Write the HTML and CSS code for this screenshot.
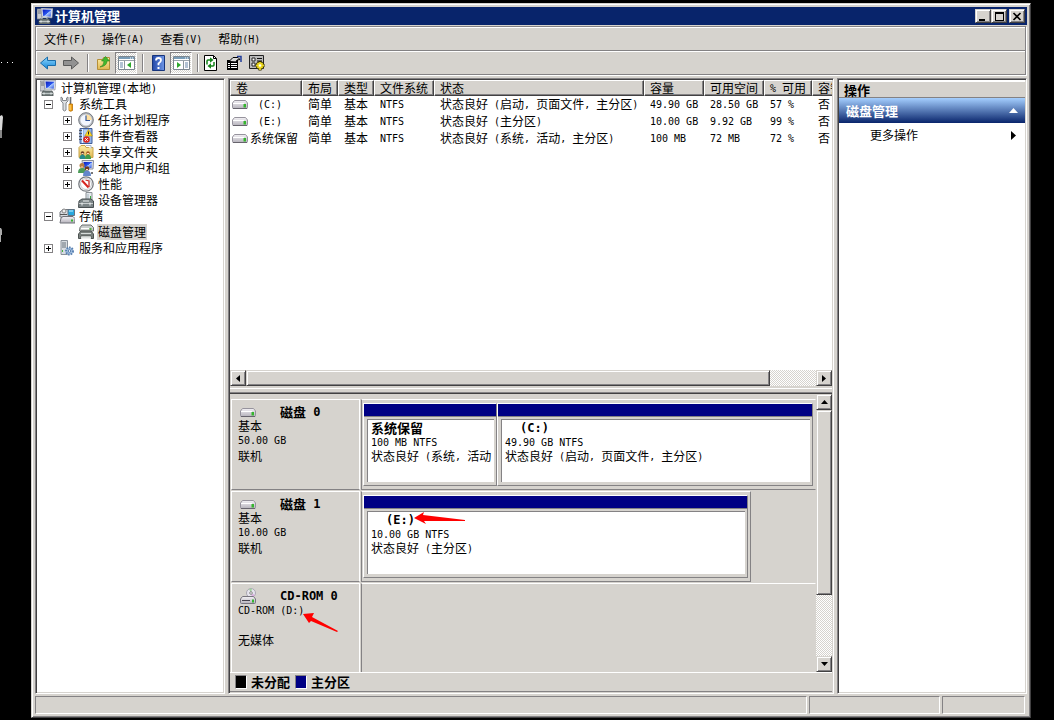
FILE: index.html
```html
<!DOCTYPE html>
<html lang="zh-CN">
<head>
<meta charset="utf-8">
<title>计算机管理</title>
<link rel="stylesheet" href="styles.css">
</head>
<body>
<svg class="sprites" aria-hidden="true">
  <defs>
    <linearGradient id="g-disk" x1="0" y1="0" x2="0" y2="1"><stop offset="0" stop-color="#f4f2f6"/><stop offset="1" stop-color="#b5b2bb"/></linearGradient>
    <linearGradient id="g-screen" x1="0" y1="0" x2="1" y2="1"><stop offset="0" stop-color="#0818b8"/><stop offset=".5" stop-color="#2a55ee"/><stop offset=".55" stop-color="#a8c8ff"/><stop offset="1" stop-color="#2448d8"/></linearGradient>
    <linearGradient id="g-blue" x1="0" y1="0" x2="0" y2="1"><stop offset="0" stop-color="#8fd8ff"/><stop offset="1" stop-color="#1687d8"/></linearGradient>
    <linearGradient id="g-folder" x1="0" y1="0" x2="0" y2="1"><stop offset="0" stop-color="#fff0a8"/><stop offset="1" stop-color="#dfb650"/></linearGradient>
    <linearGradient id="g-help" x1="0" y1="0" x2="1" y2="0"><stop offset="0" stop-color="#2348a8"/><stop offset="1" stop-color="#6f96e6"/></linearGradient>
  </defs>
  <symbol id="i-computer" viewBox="0 0 16 16">
    <path d="M0 1h5v10H0z" fill="#c9ccd2" stroke="#777b84" stroke-width=".8"/>
    <path d="M1 3h3M1 5h3" stroke="#6d7179"/>
    <path d="M4 0l12 .5-1 9.5-10-1z" fill="#dfe3ec" stroke="#848894" stroke-width=".6"/>
    <path d="M5.500 1.500l9 .3-.8 7-7.500-.8z" fill="url(#g-screen)"/>
    <path d="M3 11h9l1 2v3H2v-3z" fill="#768080" stroke="#4a5152" stroke-width=".8"/>
    <path d="M5 11V9.500h5V11M2 13.500h11" fill="none" stroke="#bcc5c5"/>
    <path d="M4 12.500v2M11 12.500v2" stroke="#eef2f2"/>
  </symbol>
  <symbol id="i-disk" viewBox="0 0 16 16">
    <path d="M2.500 4.500h11l2 2.500v4.500q0 1-1 1h-13q-1 0-1-1V7z" fill="url(#g-disk)" stroke="#96939d"/>
    <path d="M1 7.500h11" stroke="#fff"/>
    <path d="M1 12.500h14" stroke="#66636c"/>
    <path d="M11.500 8h2.500v3.500h-2.500z" fill="#35b52e"/>
  </symbol>
  <symbol id="i-cd" viewBox="0 0 16 16">
    <circle cx="11" cy="5" r="4.500" fill="#e6e4ee" stroke="#aaa7b2"/>
    <path d="M11 5l-2-4 3-.5z" fill="#9ed49a"/><path d="M11 5l4 2-3 2.500z" fill="#d8b0dd"/>
    <circle cx="11" cy="5" r="1.300" fill="#fff" stroke="#888"/>
    <path d="M2.500 8.500h11l2 2.500v3.500q0 1-1 1h-13q-1 0-1-1V11z" fill="url(#g-disk)" stroke="#77747e"/>
    <path d="M2 12.500h8" stroke="#44424c"/><path d="M12 11.500h2v3h-2z" fill="#35b52e"/>
  </symbol>
  <symbol id="i-tools" viewBox="0 0 16 16">
    <path d="M2 1v4l2 2v7q1.500 2 3 0V7l2-2V1L7.500 2v2.500h-4V2z" fill="#dde0e3" stroke="#777c82" stroke-width=".9"/>
    <path d="M11.500 1v7" stroke="#666b70" stroke-width="1.600"/>
    <path d="M10 8h3.500v6.500q-1.800 1.500-3.500 0z" fill="#f0a31a" stroke="#b66f05" stroke-width=".8"/><path d="M11 9v5" stroke="#ffe08a"/>
  </symbol>
  <symbol id="i-clock" viewBox="0 0 16 16">
    <circle cx="8" cy="8" r="7.300" fill="#b9bdc3" stroke="#73777e"/>
    <circle cx="8" cy="8" r="5.600" fill="#f3f7ff"/><path d="M8 8V2.400A5.600 5.600 0 0 1 13.600 8z" fill="#ffe0a0"/>
    <path d="M8 3.500V8.500h4" fill="none" stroke="#35589a" stroke-width="1.200"/>
  </symbol>
  <symbol id="i-event" viewBox="0 0 16 16">
    <path d="M2 .5h12v15H2z" fill="#91b4e8" stroke="#405d98"/><path d="M4.500 1v14" stroke="#e8f0ff"/>
    <path d="M1 2.500h3M1 5.500h3M1 8.500h3M1 11.500h3" stroke="#4d5560"/>
    <path d="M6 3h6M6 5h5M6 7h6" stroke="#e5eefc"/>
    <path d="M10.500 1.500l3.800 6.500H6.800z" fill="#ffdb2a" stroke="#b78b00" stroke-width=".6"/><path d="M10.500 3.500v3" stroke="#222"/>
    <circle cx="8.500" cy="11.500" r="3.300" fill="#dc2822"/><path d="M7.200 10.200l2.600 2.600M9.800 10.200l-2.600 2.600" stroke="#fff"/>
  </symbol>
  <symbol id="i-share" viewBox="0 0 16 16">
    <path d="M1 3.500l2-2h4l1 2h7v10H1z" fill="url(#g-folder)" stroke="#c9a44a"/>
    <path d="M8 1.500h5v3" fill="#fff" stroke="#a8b8d0"/>
    <circle cx="4.500" cy="9" r="1.800" fill="#68412b"/><path d="M1.500 15q0-4.500 3-4.500t3 4.500z" fill="#268b8b"/>
    <circle cx="10" cy="9" r="1.800" fill="#a4571f"/><path d="M7 15q0-4.500 3-4.500t3 4.500z" fill="#3f9b4b"/><path d="M3.500 9.500h2M9 9.500h2" stroke="#ffd8b5"/>
  </symbol>
  <symbol id="i-users" viewBox="0 0 16 16">
    <path d="M4 .5h11.500l-.5 8.500H5z" fill="#dfe3ec" stroke="#8a8e99"/><path d="M5.500 2h8.500l-.5 6H6z" fill="url(#g-screen)"/>
    <circle cx="4" cy="5.500" r="2.500" fill="#b87d40"/><path d="M0 13q0-5 4-5t4 5z" fill="#4c9c58"/>
    <circle cx="9" cy="8.500" r="2.300" fill="#6b3b24"/><path d="M5 16q0-5.500 4-5.500t4 5.500z" fill="#6387ca"/><path d="M8 9.500h2M3 7h2" stroke="#ffd8b5"/>
    <path d="M13 13h2" stroke="#777" stroke-width="2"/>
  </symbol>
  <symbol id="i-perf" viewBox="0 0 16 16">
    <circle cx="8" cy="8" r="7.200" fill="#fff" stroke="#777b80" stroke-width="1.300"/>
    <circle cx="8" cy="8" r="5.500" fill="none" stroke="#c3c7cb"/>
    <path d="M4 4.500l6.500 7" fill="none" stroke="#d72520" stroke-width="2"/><path d="M7.500 4l3.500 1v6" fill="none" stroke="#c72a27" stroke-width="1.300"/>
  </symbol>
  <symbol id="i-device" viewBox="0 0 16 16">
    <path d="M8 .5h6v8H8z" fill="#e4e8ec" stroke="#8a9095"/><path d="M10 2v5" stroke="#a3b4bd"/><path d="M12 4h1v4h-1z" fill="#3aab3a"/>
    <path d="M1 9l3-2h9l2.500 2v6.500H.5z" fill="#7c8587" stroke="#495052"/>
    <path d="M1 11.500h14" stroke="#c8cecf"/><path d="M5 9h6M4 10.500v3M12 10.500v3" stroke="#eef1f1"/>
  </symbol>
  <symbol id="i-storage" viewBox="0 0 16 16">
    <path d="M1 4l3-2.500h6V9H1z" fill="#d9dbe0" stroke="#777b81"/><circle cx="5" cy="3" r="2" fill="#eee" stroke="#888"/>
    <path d="M9 1.500h6.500v6H9z" fill="#28a8df" stroke="#637483"/><path d="M10 3h4" stroke="#c6f1ff"/>
    <path d="M2 10l2-1.500h10l2 2v4.500H1z" fill="url(#g-disk)" stroke="#6f7178"/><path d="M12 11.500h2v2h-2z" fill="#35b52e"/><path d="M1 6.500h7" stroke="#555"/>
  </symbol>
  <symbol id="i-diskmgmt" viewBox="0 0 16 16">
    <path d="M2 3.500L4 1h9l2.500 2.500V7h-14z" fill="#c9cdcc" stroke="#686d6c"/><path d="M3 4.500h8" stroke="#fff"/><path d="M11.500 4h2v2h-2z" fill="#55b33d"/>
    <path d="M.5 10L3 7h10l2.500 3v4.500H13V12H3v2.500H.5z" fill="#7a807e" stroke="#4e5452"/><path d="M3 9.500h10" stroke="#d7dcda"/>
    <path d="M3 12.500h10v2H3z" fill="#dfe2e1"/>
  </symbol>
  <symbol id="i-services" viewBox="0 0 16 16">
    <path d="M2 .5h6.500v14H2z" fill="#d8dde2" stroke="#89919a"/><path d="M3 3h4M3 5h4M3 7h4" stroke="#68727c"/><path d="M3 10h1v2H3z" fill="#43b43c"/>
    <circle cx="10.500" cy="11" r="3.500" fill="#a8c4e4" stroke="#5a82b2" stroke-width="2" stroke-dasharray="1.600 1"/><circle cx="10.500" cy="11" r="1.300" fill="#fff" stroke="#5079aa"/>
  </symbol>
  <symbol id="i-console" viewBox="0 0 17 14">
    <path d="M.5.500h16v13H.5z" fill="#fff" stroke="#7c8790"/><path d="M1 2h15" stroke="#7a9db8" stroke-width="2"/><path d="M12 2h3" stroke="#fff" stroke-dasharray="1 1"/>
    <path d="M1 4.500h15" stroke="#9aa4ac"/>
  </symbol>
</svg>

<svg class="desktop-left" width="14" height="250" viewBox="0 0 14 250" aria-hidden="true">
  <path d="M1 62h1v1H1zM7 62h1v1H7zM12 62h1v1h-1z" fill="#fff"/>
  <path d="M0 116l2-1 1 2-1 13H0z" fill="#d8d8d8"/><path d="M0 130h2v8H0z" fill="#888"/>
  <path d="M0 228h1l1 2v5H1v7H0z" fill="#aaa"/>
</svg>

<div class="window">
  <header class="titlebar">
    <svg class="icon"><use href="#i-computer"/></svg>
    <h1 class="strong">计算机管理</h1>
    <button class="raised caption" aria-label="最小化"><svg width="10" height="9"><path d="M1 7h6v2H1z"/></svg></button>
    <button class="raised caption" aria-label="最大化"><svg width="10" height="9"><path d="M1 0h9v9H1zM2 2v6h7V2z" fill-rule="evenodd"/></svg></button>
    <button class="raised caption caption-close" aria-label="关闭"><svg width="10" height="9"><path d="M1.500 1l7 7M8.500 1l-7 7" stroke="#000" stroke-width="1.600"/></svg></button>
  </header>

  <div class="bands">
    <nav class="menubar">
      <button>文件<span class="en">(F)</span></button>
      <button>操作<span class="en">(A)</span></button>
      <button>查看<span class="en">(V)</span></button>
      <button>帮助<span class="en">(H)</span></button>
    </nav>
    <div class="toolbar" role="toolbar">
      <button aria-label="后退"><svg class="icon"><path d="M.5 8l7-6v3.500h8v5h-8V14z" fill="url(#g-blue)" stroke="#1b6daa"/></svg></button>
      <button aria-label="前进"><svg class="icon"><path d="M15.500 8l-7-6v3.500h-8v5h8V14z" fill="#929292" stroke="#5a5a5a"/></svg></button>
      <span class="divider"></span>
      <button aria-label="上移"><svg class="icon"><path d="M1.500 4.500h5l1-2h6v12h-12z" fill="url(#g-folder)" stroke="#b68f38"/><path d="M4 12q4-1 4-6H5.500l4-4.500 4 4.500H11q0 5-7 6z" fill="#43b82f" stroke="#24861a" stroke-width=".6"/></svg></button>
      <button class="pressed" aria-label="显示或隐藏控制台树" aria-pressed="true"><svg width="17" height="14"><use href="#i-console"/><path d="M6.500 5v8" stroke="#8b959d"/><path d="M2 7h3M2 9h3M2 11h3" stroke="#6685a8"/><path d="M13 6v6L9 9z" fill="#2da82c"/></svg></button>
      <span class="divider"></span>
      <button aria-label="帮助"><svg class="icon"><path d="M1.500.500h12v15h-12z" fill="url(#g-help)" stroke="#17357c"/><path d="M5 5.500q0-2.500 2.500-2.500T10 5.300Q10 7 7.500 8.500v1.800" fill="none" stroke="#fff" stroke-width="1.800"/><path d="M6.500 12h2v2h-2z" fill="#fff"/></svg></button>
      <button class="pressed" aria-label="显示或隐藏操作窗格" aria-pressed="true"><svg width="17" height="14"><use href="#i-console"/><path d="M10.500 5v8" stroke="#8b959d"/><path d="M12 7h3M12 9h3M12 11h3" stroke="#6685a8"/><path d="M4 6v6l4-3z" fill="#2da82c"/></svg></button>
      <span class="divider divider-tight"></span>
      <button aria-label="刷新"><svg class="icon"><path d="M1.500.500h9l3 3v12h-12z" fill="#fff" stroke="#000"/><path d="M10.500.500v3h3" fill="none" stroke="#000"/><path d="M4 9.500V6q0-1 1-1h3M11 7v3q0 1-1 1H7" fill="none" stroke="#138519" stroke-width="1.500"/><path d="M7 2.300L10.500 5 7 7.700zM8 8.300L4.500 11 8 13.700z" fill="#138519"/></svg></button>
      <button aria-label="属性"><svg class="icon"><path d="M1 5h11v10H1z"/><path d="M2 8.500h2M5 8.500h6M2 10.500h2M5 10.500h6M2 12.500h2M5 12.500h6" stroke="#fff"/><path d="M3 6.500l4-4h5l2 2-3 .5-1 2z" fill="#d9d9d9" stroke="#000"/><path d="M11 1.500h4V7" fill="none" stroke="#213c98" stroke-width="1.500"/></svg></button>
      <button aria-label="设置"><svg class="icon"><path d="M.5.500h14v13H.5z" fill="#bbb" stroke="#222"/><path d="M3 3h3v3H3zM3 8h3v3H3z" fill="#fff" stroke="#222"/><path d="M8 3.500h5M8 6h5" stroke="#111"/><path d="M11 6v9.500M6.500 10.500h9M8 7.500l6 6M14 7.500l-6 6" stroke="#302b00" stroke-width="3"/><path d="M11 7v8M7 10.500h8M8.500 8l5 5M13.500 8l-5 5" stroke="#f0dc20" stroke-width="1.800"/><circle cx="11" cy="10.500" r="1.200" fill="#fff"/></svg></button>
    </div>
  </div>

  <main class="panes">
    <nav class="pane">
      <ul class="tree">
        <li><div class="node root"><svg class="icon"><use href="#i-computer"/></svg><span>计算机管理<span class="en">(</span>本地<span class="en">)</span></span></div>
          <ul>
            <li><div class="node"><button class="toggle open" aria-label="折叠"></button><svg class="icon"><use href="#i-tools"/></svg><span>系统工具</span></div>
              <ul>
                <li class="node"><button class="toggle" aria-label="展开"></button><svg class="icon"><use href="#i-clock"/></svg><span>任务计划程序</span></li>
                <li class="node"><button class="toggle" aria-label="展开"></button><svg class="icon"><use href="#i-event"/></svg><span>事件查看器</span></li>
                <li class="node"><button class="toggle" aria-label="展开"></button><svg class="icon"><use href="#i-share"/></svg><span>共享文件夹</span></li>
                <li class="node"><button class="toggle" aria-label="展开"></button><svg class="icon"><use href="#i-users"/></svg><span>本地用户和组</span></li>
                <li class="node"><button class="toggle" aria-label="展开"></button><svg class="icon"><use href="#i-perf"/></svg><span>性能</span></li>
                <li class="node leaf"><svg class="icon"><use href="#i-device"/></svg><span>设备管理器</span></li>
              </ul>
            </li>
            <li><div class="node"><button class="toggle open" aria-label="折叠"></button><svg class="icon"><use href="#i-storage"/></svg><span>存储</span></div>
              <ul>
                <li class="node leaf"><svg class="icon"><use href="#i-diskmgmt"/></svg><span class="selected">磁盘管理</span></li>
              </ul>
            </li>
            <li class="node"><button class="toggle" aria-label="展开"></button><svg class="icon"><use href="#i-services"/></svg><span>服务和应用程序</span></li>
          </ul>
        </li>
      </ul>
    </nav>

    <section class="pane center">
      <div class="volumes">
        <table>
          <colgroup><col class="c-name"><col class="c-small"><col class="c-small"><col class="c-mid"><col><col class="c-mid"><col class="c-mid"><col class="c-pct"><col class="c-last"></colgroup>
          <thead><tr><th>卷</th><th>布局</th><th>类型</th><th>文件系统</th><th>状态</th><th>容量</th><th>可用空间</th><th><span class="en">% </span>可用</th><th>容错</th></tr></thead>
          <tbody>
            <tr><td><div class="volume"><svg class="icon"><use href="#i-disk"/></svg><span class="letter"><span class="en">(C:)</span></span></div></td><td>简单</td><td>基本</td><td><span class="en">NTFS</span></td><td>状态良好<span class="en"> (</span>启动<span class="en">, </span>页面文件<span class="en">, </span>主分区<span class="en">)</span></td><td><span class="en">49.90 GB</span></td><td><span class="en">28.50 GB</span></td><td><span class="en">57 %</span></td><td>否</td></tr>
            <tr><td><div class="volume"><svg class="icon"><use href="#i-disk"/></svg><span class="letter"><span class="en">(E:)</span></span></div></td><td>简单</td><td>基本</td><td><span class="en">NTFS</span></td><td>状态良好<span class="en"> (</span>主分区<span class="en">)</span></td><td><span class="en">10.00 GB</span></td><td><span class="en">9.92 GB</span></td><td><span class="en">99 %</span></td><td>否</td></tr>
            <tr><td><div class="volume"><svg class="icon"><use href="#i-disk"/></svg><span>系统保留</span></div></td><td>简单</td><td>基本</td><td><span class="en">NTFS</span></td><td>状态良好<span class="en"> (</span>系统<span class="en">, </span>活动<span class="en">, </span>主分区<span class="en">)</span></td><td><span class="en">100 MB</span></td><td><span class="en">72 MB</span></td><td><span class="en">72 %</span></td><td>否</td></tr>
          </tbody>
        </table>
      </div>
      <div class="hscroll">
        <button class="raised" aria-label="向左滚动"><svg width="4" height="7"><path d="M4 0v7L0 3.500z"/></svg></button>
        <div class="track"><div class="raised thumb"></div></div>
        <button class="raised" aria-label="向右滚动"><svg width="4" height="7"><path d="M0 0v7l4-3.500z"/></svg></button>
      </div>
      <div class="splitter"></div>

      <div class="graphic">
        <div class="disks">
          <section class="disk">
            <div class="info">
              <h2><svg class="icon"><use href="#i-disk"/></svg><span class="strong">磁盘<span class="en"> 0</span></span></h2>
              <p>基本</p><p><span class="en">50.00 GB</span></p><p class="state">联机</p>
            </div>
            <div class="canvas">
              <div class="part part-reserved"><div class="stripe"></div><div class="face">
                <p class="strong">系统保留</p><p><span class="en">100 MB NTFS</span></p><p>状态良好<span class="en"> (</span>系统<span class="en">, </span>活动</p></div></div>
              <div class="part"><div class="stripe"></div><div class="face">
                <p class="strong drive"><span class="en">(C:)</span></p><p><span class="en">49.90 GB NTFS</span></p><p>状态良好<span class="en"> (</span>启动<span class="en">, </span>页面文件<span class="en">, </span>主分区<span class="en">)</span></p></div></div>
            </div>
          </section>
          <section class="disk">
            <div class="info">
              <h2><svg class="icon"><use href="#i-disk"/></svg><span class="strong">磁盘<span class="en"> 1</span></span></h2>
              <p>基本</p><p><span class="en">10.00 GB</span></p><p class="state">联机</p>
            </div>
            <div class="canvas canvas-short">
              <div class="part"><div class="stripe"></div><div class="face">
                <p class="strong drive"><span class="en">(E:)</span></p><p><span class="en">10.00 GB NTFS</span></p><p>状态良好<span class="en"> (</span>主分区<span class="en">)</span></p></div></div>
              <svg class="pointer pointer-e" width="52" height="12" aria-hidden="true"><path d="M0 6L10 0l-1 3 42 5v1L10 9l2 3z"/></svg>
            </div>
          </section>
          <section class="disk">
            <div class="info">
              <h2><svg class="icon"><use href="#i-cd"/></svg><span class="strong"><span class="en">CD-ROM 0</span></span></h2>
              <p><span class="en">CD-ROM (D:)</span></p><p></p><p class="state">无媒体</p>
              <svg class="pointer pointer-d" width="36" height="20" aria-hidden="true"><path d="M0 1L11 0 9 4l26 14-1 1L8 8l-2 2z"/></svg>
            </div>
            <div class="canvas canvas-empty"></div>
          </section>
        </div>
        <div class="vscroll">
          <button class="raised" aria-label="向上滚动"><svg width="7" height="4"><path d="M0 4h7L3.500 0z"/></svg></button>
          <div class="track"><div class="raised thumb"></div></div>
          <button class="raised" aria-label="向下滚动"><svg width="7" height="4"><path d="M0 0h7L3.500 4z"/></svg></button>
        </div>
      </div>
      <div class="legend strong"><span class="swatch"></span><span>未分配</span><span class="swatch swatch-primary"></span><span>主分区</span></div>
    </section>

    <aside class="pane">
      <h2 class="actions-title strong">操作</h2>
      <button class="actions-group strong">磁盘管理<svg width="9" height="5"><path d="M0 5h9L4.500 0z" fill="#fff"/></svg></button>
      <button class="actions-more">更多操作<svg width="5" height="9"><path d="M0 0v9l5-4.500z"/></svg></button>
    </aside>
  </main>

  <footer class="statusbar"><span></span><span></span><span></span></footer>
</div>
</body>
</html>
```

FILE: styles.css
```css
:root {
  --face: #d6d3ce;
  --light: #fff;
  --shade: #848284;
  --dark: #424142;
  --title: #08246b;
  --navy: #000084;
}

* { box-sizing: border-box; }

body {
  margin: 0;
  height: 100vh;
  padding: 3px 23px 2px 31px;
  background: #000;
  color: #000;
  font: 12px/16px "Noto Sans CJK SC", sans-serif;
  overflow: hidden;
}

h1, h2, p, ul { margin: 0; padding: 0; font-size: inherit; font-weight: inherit; }
ul { list-style: none; }
button { margin: 0; padding: 0; border: 0; background: none; font: inherit; color: inherit; }
svg { flex: none; display: block; }

.sprites { position: absolute; width: 0; height: 0; }
.desktop-left { position: absolute; left: 0; top: 0; }
.icon { width: 16px; height: 16px; }
.en { font-family: "DejaVu Sans Mono", monospace; font-size: 10px; line-height: 1; vertical-align: 1px; white-space: pre; }
.strong { font-size: 13px; font-weight: bold; }
.strong .en { font-size: 12px; }

.raised {
  background: var(--face);
  border: 1px solid;
  border-color: var(--face) var(--dark) var(--dark) var(--face);
  box-shadow: inset 1px 1px var(--light), inset -1px -1px var(--shade);
}

.window {
  height: 100%;
  display: flex;
  flex-direction: column;
  padding: 3px;
  background: var(--face);
  border: 1px solid;
  border-color: var(--face) var(--dark) var(--dark) var(--face);
  box-shadow: inset 1px 1px var(--light), inset -1px -1px var(--shade);
}

/* Title bar */
.titlebar { display: flex; align-items: center; height: 18px; padding: 0 2px; background: var(--title); color: #fff; }
.titlebar h1 { flex: 1; margin-left: 2px; }
.caption { display: flex; align-items: center; justify-content: center; width: 16px; height: 14px; }
.caption-close { margin-left: 2px; }

/* Menu and toolbar */
.bands {
  margin: 1px 1px 3px 0;
  border: 1px solid var(--shade);
  box-shadow: inset 1px 1px var(--light), 1px 1px var(--light);
}
.menubar { display: flex; gap: 16px; height: 24px; padding-left: 8px; border-bottom: 1px solid var(--shade); align-items: center; }
.toolbar { display: flex; align-items: center; height: 23px; border-top: 1px solid var(--light); }
.toolbar button { display: flex; align-items: center; justify-content: center; width: 23px; height: 22px; }
.toolbar .pressed {
  width: 22px;
  border: 1px solid;
  border-color: var(--shade) var(--light) var(--light) var(--shade);
  background: repeating-conic-gradient(#fff 0 25%, var(--face) 0 50%) 0 0 / 2px 2px;
}
.divider { width: 2px; height: 18px; margin: 0 3px 0 5px; border-left: 1px solid var(--shade); border-right: 1px solid var(--light); }
.divider-tight { margin-right: 0; }

/* Panes */
.panes { flex: 1; min-height: 0; display: grid; grid-template-columns: 190px minmax(0, 1fr) 190px; gap: 3px; }
.pane {
  min-height: 0;
  background: #fff;
  border: 1px solid;
  border-color: var(--shade) var(--light) var(--light) var(--shade);
  box-shadow: inset 1px 1px var(--dark), inset -1px -1px var(--face);
  padding: 1px;
}

/* Tree */
.node { display: flex; align-items: center; height: 16px; padding-left: 7px; white-space: nowrap; }
.node .icon { margin-right: 4px; }
.node.root { padding-left: 3px; }
.node.root .icon { margin-right: 5px; }
.node.leaf { padding-left: 22px; }
.tree ul ul { padding-left: 19px; }
.tree .toggle {
  width: 9px;
  height: 9px;
  margin-right: 6px;
  border: 1px solid var(--shade);
  background:
    linear-gradient(#000, #000) center / 5px 1px no-repeat,
    linear-gradient(#000, #000) center / 1px 5px no-repeat;
}
.tree .toggle.open { background: linear-gradient(#000, #000) center / 5px 1px no-repeat; }
.selected { background: var(--face); padding: 0 1px; margin: 0 -1px; }

/* Volume list */
.center { display: flex; flex-direction: column; }
.volumes { flex: 1 1 0; min-height: 0; overflow: hidden; }
table { width: 100%; table-layout: fixed; border-collapse: separate; border-spacing: 0; }
.c-name { width: 72px; }
.c-small { width: 36px; }
.c-mid { width: 60px; }
.c-pct { width: 48px; }
.c-last { width: 20px; }
th, td { padding: 0 0 0 6px; overflow: hidden; white-space: nowrap; text-align: left; font-weight: normal; }
th {
  height: 16px;
  padding-left: 5px;
  line-height: 14px;
  background: var(--face);
  border: 1px solid;
  border-color: var(--light) var(--dark) var(--dark) var(--light);
  box-shadow: inset -1px -1px var(--shade);
}
th:last-child { border-right: 0; box-shadow: inset 0 -1px var(--shade); }
td { height: 17px; line-height: 16px; vertical-align: top; }
td:first-child { padding-left: 2px; }
.volume { display: flex; align-items: center; gap: 2px; height: 16px; }
.letter { padding-left: 8px; }

/* Scroll bars */
.hscroll { display: grid; grid-template-columns: 16px 1fr 16px; height: 16px; }
.vscroll { display: grid; grid-template-rows: 16px 1fr 16px; width: 16px; }
.hscroll button, .vscroll button { display: flex; align-items: center; justify-content: center; }
.track { background: repeating-conic-gradient(#fff 0 25%, var(--face) 0 50%) 0 0 / 2px 2px; }
.hscroll .thumb { width: 92%; height: 100%; }
.vscroll .thumb { height: 75%; }
.splitter {
  height: 8px;
  background: var(--face);
  border-top: 2px solid var(--face);
  border-bottom: 1px solid var(--dark);
  box-shadow: inset 0 1px var(--light), inset 0 -1px var(--shade);
}

/* Graphical view */
.graphic { display: grid; grid-template-columns: minmax(0, 1fr) 16px; background: var(--face); }
.disks { display: flex; flex-direction: column; gap: 1px; padding: 5px 0 0 1px; }
.disk { display: grid; grid-template-columns: 129px minmax(0, 1fr); gap: 1px; height: 91px; }
.disk:last-child { height: 89px; }
.info {
  position: relative;
  padding: 5px 0 0 6px;
  border: 1px solid;
  border-color: var(--light) var(--light) var(--shade) var(--light);
}
.disk:last-child .info { border-bottom: 0; }
.info p, .face p { height: 14px; line-height: 14px; white-space: nowrap; }
.info h2 { display: flex; align-items: center; gap: 24px; height: 14px; padding-left: 2px; }
.info .state { height: 16px; line-height: 16px; margin-top: 1px; }
.canvas {
  position: relative;
  display: flex;
  padding: 3px 2px 3px 1px;
  border: 1px solid;
  border-color: var(--light) transparent var(--shade) var(--shade);
}
.canvas-short { margin-right: 65px; border-right-color: var(--shade); }
.canvas-empty { border-bottom: 0; }
.part {
  flex: 1;
  min-width: 0;
  display: flex;
  flex-direction: column;
  border: 1px solid;
  border-color: var(--light) var(--shade) var(--shade) var(--light);
}
.part-reserved { flex: 0 0 134px; }
.stripe { height: 13px; background: var(--navy); border-bottom: 1px solid var(--shade); }
.face {
  flex: 1;
  margin: 2px 2px 3px 3px;
  padding: 1px 0 0 3px;
  background: #fff;
  border-top: 1px solid var(--shade);
  border-left: 1px solid var(--shade);
}
.face .drive { padding-left: 15px; }
.pointer { position: absolute; fill: #ff0000; }
.pointer-e { left: 52px; top: 20px; }
.pointer-d { left: 71px; top: 29px; }

.legend {
  display: flex;
  align-items: center;
  gap: 4px;
  height: 20px;
  padding-left: 5px;
  line-height: 14px;
  background: var(--face);
  border-top: 1px solid var(--light);
  border-bottom: 1px solid var(--shade);
}
.swatch { width: 12px; height: 14px; background: #000; border: 1px solid; border-color: var(--shade) var(--light) var(--light) var(--shade); }
.swatch-primary { background: var(--navy); }
.legend .swatch-primary { margin-left: 1px; }

/* Actions */
.actions-title {
  height: 17px;
  margin-top: 1px;
  padding-left: 5px;
  line-height: 15px;
  background: var(--face);
  border-top: 1px solid var(--light);
  border-bottom: 1px solid var(--shade);
}
.pane .actions-group, .pane .actions-more { display: flex; align-items: center; justify-content: space-between; }
.actions-group {
  width: 100%;
  height: 25px;
  padding: 0 7px;
  color: #fff;
  background: linear-gradient(#a5cfff, var(--title));
}
.actions-more { width: 100%; height: 24px; padding: 0 9px 0 31px; }

/* Status bar */
.statusbar { display: grid; grid-template-columns: 1fr 131px 83px; gap: 2px; height: 18px; margin: 2px 2px 0 0; }
.statusbar span { border: 1px solid; border-color: var(--shade) var(--light) var(--light) var(--shade); }
```
